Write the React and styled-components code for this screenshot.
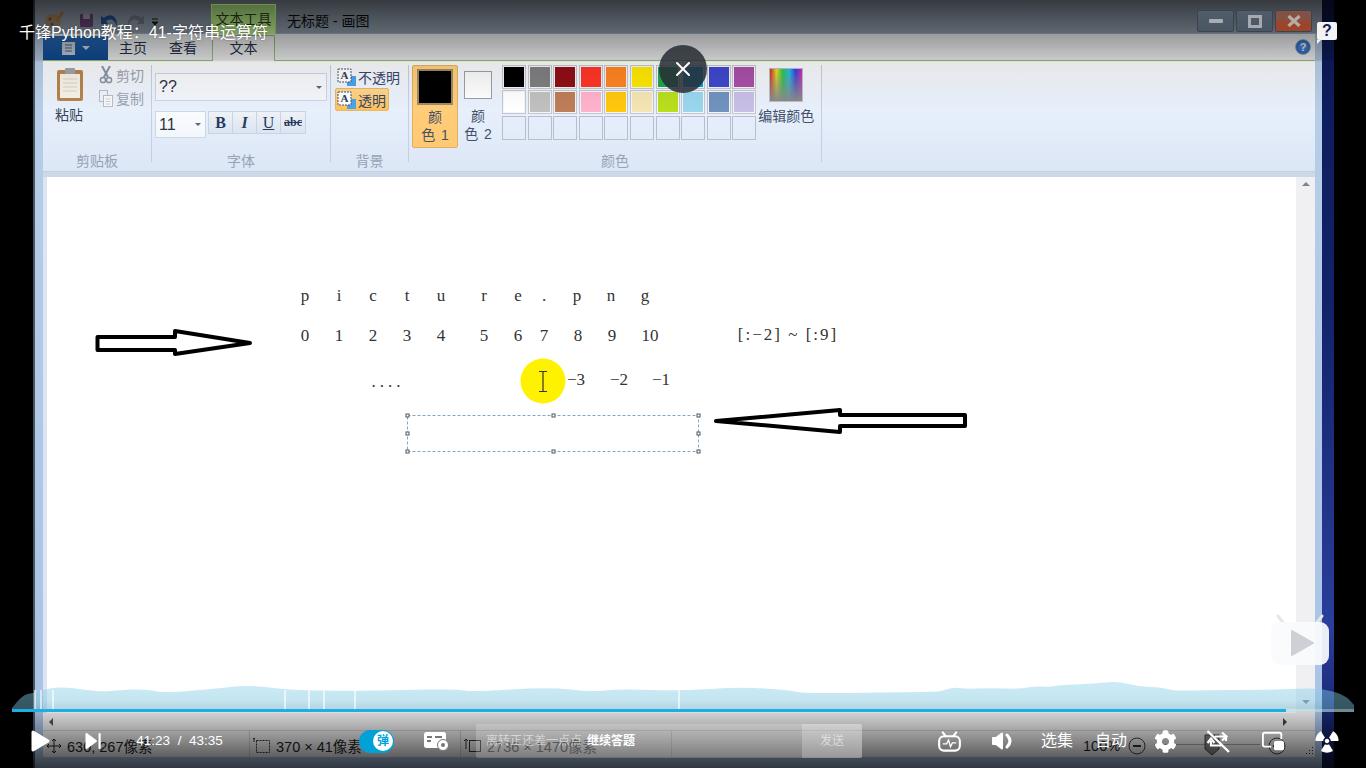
import React from 'react';
import styled, { createGlobalStyle } from 'styled-components';
import { FaCog, FaRadiation } from 'react-icons/fa';

const UI_FONT = `"Liberation Sans", "Noto Sans CJK SC", sans-serif`;

const GlobalStyle = createGlobalStyle`
  html, body { margin: 0; padding: 0; background: #000; }
  * { box-sizing: border-box; }
`;

const Stage = styled.div`
  position: relative;
  width: 1366px;
  height: 768px;
  overflow: hidden;
  background: #000;
  display: flex;
  padding-left: 33px;
  font-family: ${UI_FONT};
`;

const Desktop = styled.div`
  width: 12px;
  height: 100%;
  background: linear-gradient(#0c1a55 0, #12236a 40%, #2a3f9c 82%, #1a2a78 92%, #0f1c50 100%);
`;

const Win = styled.div`
  width: 1289px;
  height: 100%;
  display: flex;
  flex-direction: column;
  border-left: 2px solid #4a5564;
  background: linear-gradient(#b9cfe8, #a9c3e6);
`;

/* title bar */
const TitleBar = styled.div`
  height: 34px;
  flex: none;
  display: flex;
  align-items: flex-start;
  padding-left: 9px;
  background: linear-gradient(#c4d4e6, #bccee2);
`;

const Qat = styled.div`
  width: 167px;
  height: 34px;
  padding-top: 10px;
  flex: none;
`;

const ContextTab = styled.div`
  position: relative;
  z-index: 1;
  margin-top: 4px;
  width: 65px;
  height: 30px;
  background: linear-gradient(#55703f, #7fa35f);
  border: 1px solid #6c8c50;
  border-bottom: 0;
  color: #1c2214;
  font-size: 14px;
  line-height: 28px;
  text-align: center;
  white-space: nowrap;
`;

const WinTitle = styled.div`
  margin: 10px 0 0 11px;
  font-size: 14px;
  line-height: 22px;
  color: #0d0f12;
  white-space: nowrap;
`;

const WinButtons = styled.div`
  position: relative;
  z-index: 1;
  margin: 10px 0 0 auto;
  padding-right: 10px;
  display: flex;
  gap: 2px;
`;

const WinButton = styled.div`
  width: 37px;
  height: 22px;
  border: 1px solid #3a4350;
  border-radius: 2px;
  display: flex;
  align-items: center;
  justify-content: center;
  background: ${(p) => (p.$close ? 'linear-gradient(#845244 50%, #9c4529 50%)' : 'linear-gradient(#515c6a, #4b5664)')};
`;

/* tab row */
const TabRow = styled.div`
  position: relative;
  height: 27px;
  flex: none;
  margin: 0 7px 0 8px;
  display: flex;
  align-items: flex-end;
  border-bottom: 1px solid #9dc77c;
  background: linear-gradient(#f8f9fb, #fafbfc);
`;

const FileTab = styled.div`
  width: 65px;
  height: 24px;
  background: linear-gradient(#2a6fc0, #0e4c98);
  display: flex;
  align-items: center;
  justify-content: center;
  gap: 5px;
`;

const Tab = styled.div`
  width: 50px;
  height: 24px;
  font-size: 14px;
  line-height: 24px;
  text-align: center;
  color: #26344d;
  white-space: nowrap;
  margin-left: ${(p) => p.$ml || 0}px;
`;

const ActiveTab = styled(Tab)`
  width: 63px;
  height: 26px;
  margin-bottom: -1px;
  line-height: 24px;
  background: #fbfbfb;
  border: 1px solid #9dc77c;
  border-bottom: 0;
  border-radius: 2px 2px 0 0;
`;

const HelpDot = styled.div`
  position: absolute;
  right: 4px;
  top: 5px;
  width: 16px;
  height: 16px;
  border-radius: 50%;
  border: 1px solid #9db4d4;
  background: radial-gradient(#5b9cf0, #1f5cc0);
  color: #fff;
  font-size: 11px;
  font-weight: 700;
  line-height: 14px;
  text-align: center;
`;

/* ribbon */
const Ribbon = styled.div`
  height: 111px;
  flex: none;
  margin: 0 7px 0 8px;
  display: flex;
  padding-top: 4px;
  background: linear-gradient(#fbfbfc, #e8f0fc 40%, #dce6f5);
  border-bottom: 1px solid #c4d1e4;
  color: #35466a;
  font-size: 14px;
`;

const Group = styled.div`
  width: ${(p) => p.$w}px;
  flex: none;
  display: flex;
  flex-direction: column;
  border-right: 1px solid #c3d0e4;
  height: 97px;
  position: relative;
`;

const GroupBody = styled.div`
  flex: 1;
  display: flex;
  min-height: 0;
`;

const GroupLabel = styled.div`
  position: absolute;
  left: 0;
  right: 0;
  bottom: -8px;
  text-align: center;
  font-size: 14px;
  line-height: 18px;
  color: #97a2b6;
`;

const PasteCol = styled.div`
  width: 52px;
  padding: 3px 0 0 14px;
  display: flex;
  flex-direction: column;
  align-items: flex-start;
  gap: 5px;
`;

const PasteText = styled.div`
  line-height: 18px;
  margin-left: -2px;
  color: #3a4658;
`;

const ClipCol = styled.div`
  display: flex;
  flex-direction: column;
  gap: 5px;
  padding: 1px 0 0 4px;
`;

const ClipRow = styled.div`
  display: flex;
  align-items: center;
  gap: 3px;
  height: 18px;
  color: #9aa3b2;
`;

const FontCol = styled.div`
  padding: 8px 0 0 3px;
  display: flex;
  flex-direction: column;
  gap: 10px;
`;

const Combo = styled.div`
  height: ${(p) => p.$h}px;
  width: ${(p) => p.$w}px;
  background: linear-gradient(#fafbfd, #f3f6fb);
  border: 1px solid #ccd6e6;
  padding-left: 3px;
  display: flex;
  align-items: center;
  justify-content: space-between;
  color: #2c3442;
  font-size: 16px;
  flex: none;
`;

const ComboArrow = styled.span`
  width: 0;
  height: 0;
  border-left: 3px solid transparent;
  border-right: 3px solid transparent;
  border-top: 3px solid #56657e;
  margin-right: 4px;
`;

const FontRow = styled.div`
  display: flex;
  gap: 2px;
  align-items: flex-start;
`;

const FormatBar = styled.div`
  display: flex;
  height: 23px;
  border: 1px solid #c8d3e4;
  background: linear-gradient(#eef2f8, #dbe4f1);
`;

const FormatBtn = styled.div`
  width: 24px;
  border-right: ${(p) => (p.$last ? '0' : '1px solid #c8d3e4')};
  text-align: center;
  font-family: "Liberation Serif", serif;
  font-size: ${(p) => p.$size || 16}px;
  line-height: 21px;
  font-weight: ${(p) => (p.$bold ? 700 : 400)};
  font-style: ${(p) => (p.$italic ? 'italic' : 'normal')};
  text-decoration: ${(p) => p.$deco || 'none'};
  color: #2a3a5c;
`;

const BgCol = styled.div`
  padding: 0 0 0 4px;
  display: flex;
  flex-direction: column;
`;

const BgRow = styled.div`
  display: flex;
  align-items: center;
  gap: 2px;
  width: 54px;
  height: 23px;
  padding-left: 2px;
  white-space: nowrap;
  border-radius: 2px;
  svg { flex: none; }
  ${(p) => p.$on && 'background: linear-gradient(#ffd891, #ffc05a); border: 1px solid #e8b765; padding-left: 1px;'}
`;

const ColorBtn = styled.div`
  width: ${(p) => p.$w}px;
  margin-left: ${(p) => p.$ml || 0}px;
  height: 83px;
  flex: none;
  border-radius: 2px;
  display: flex;
  flex-direction: column;
  align-items: center;
  font-size: 14px;
  line-height: 18px;
  text-align: center;
  color: #42506a;
  word-spacing: 2px;
  ${(p) => p.$on && 'background: linear-gradient(#ffd07c, #ffc973); border: 1px solid #e3ae62;'}
`;

const BigSwatch = styled.div`
  width: 36px;
  height: 36px;
  margin: 3px 0 3px;
  background: #000;
  border: 2px solid #a08a66;
  flex: none;
`;

const SmallSwatch = styled.div`
  width: 28px;
  height: 28px;
  margin: 6px 0 8px;
  background: linear-gradient(#fafafa, #ffffff);
  border: 1px solid #9aa0aa;
  flex: none;
`;

const Palette = styled.div`
  margin-left: 4px;
  display: grid;
  grid-template-columns: repeat(10, 24px);
  grid-auto-rows: 24px;
  column-gap: 1.6px;
  row-gap: 1.4px;
`;

const Cell = styled.div`
  border: 1px solid ${(p) => (p.$c ? '#c3c6cc' : '#b8bfcc')};
  background: ${(p) => p.$c || 'transparent'};
  box-shadow: ${(p) => (p.$c ? 'inset 0 0 0 1px #f4f6fa' : 'none')};
`;

const EditColors = styled.div`
  width: 60px;
  display: flex;
  flex-direction: column;
  align-items: center;
  white-space: nowrap;
  padding-top: 3px;
  color: #42506a;
`;

const Rainbow = styled.div`
  width: 34px;
  height: 34px;
  border: 1px solid #b9bec8;
  margin-bottom: 3px;
  background: linear-gradient(transparent, #8a8a8a), linear-gradient(90deg, #e02020, #f0e020, #20d040, #20c0f0, #3040e0, #e020c0);
`;

/* workspace */
const Workspace = styled.div`
  flex: 1;
  min-height: 0;
  margin: 0 7px 0 8px;
  padding: 5px 0 0 4px;
  background: linear-gradient(#ccd7e7 5px, #dde4f2 5px);
  display: flex;
`;

const Canvas = styled.div`
  position: relative;
  flex: 1;
  background: #fff;
  font-family: "Liberation Serif", serif;
  font-size: 17px;
  color: #333;
`;

const Glyph = styled.span`
  position: absolute;
  left: ${(p) => p.$x - 47}px;
  top: ${(p) => p.$y - 177}px;
  transform: translate(-50%, -50%);
  white-space: nowrap;
  line-height: 1;
  letter-spacing: ${(p) => p.$ls || 0}px;
`;

const VScroll = styled.div`
  width: 19px;
  flex: none;
  background: #f0f0f3;
  display: flex;
  flex-direction: column;
  justify-content: space-between;
  align-items: center;
  padding: 5px 0 9px;
`;

const HScroll = styled.div`
  height: 17px;
  flex: none;
  margin: 0 7px 0 8px;
  background: #f2f2f4;
  display: flex;
  justify-content: space-between;
  align-items: center;
  padding: 0 28px 0 6px;
`;

const Arrow = styled.span`
  width: 0;
  height: 0;
  ${(p) => p.$dir === 'up' && 'border-left: 4px solid transparent; border-right: 4px solid transparent; border-bottom: 4px solid #7b8494;'}
  ${(p) => p.$dir === 'down' && 'border-left: 4px solid transparent; border-right: 4px solid transparent; border-top: 4px solid #7b8494;'}
  ${(p) => p.$dir === 'left' && 'border-top: 4px solid transparent; border-bottom: 4px solid transparent; border-right: 4px solid #555;'}
  ${(p) => p.$dir === 'right' && 'border-top: 4px solid transparent; border-bottom: 4px solid transparent; border-left: 4px solid #444;'}
`;

const StatusBar = styled.div`
  height: 27px;
  flex: none;
  margin: 0 7px 0 8px;
  background: #efeff1;
  border-top: 1px solid #d5d2d0;
  display: flex;
  color: #1f1f1f;
  font-size: 14.5px;
`;

const StatusCell = styled.div`
  width: ${(p) => p.$w}px;
  flex: none;
  display: flex;
  align-items: center;
  gap: 5px;
  padding-top: 3px;
  padding-left: ${(p) => p.$pl || 4}px;
  border-right: 1px solid #d0cdcb;
  white-space: nowrap;
  color: ${(p) => p.$c || '#1f1f1f'};
`;

const ZoomCell = styled.div`
  flex: 1;
  display: flex;
  align-items: center;
  gap: 8px;
  padding: 3px 0 0 411px;
`;

const Slider = styled.div`
  position: relative;
  width: 106px;
  height: 1px;
  background: #a6a6a6;
  margin-top: -3px;
`;

const SliderThumb = styled.svg`
  position: absolute;
  left: 50px;
  top: -10px;
`;

const Grip = styled.svg`
  margin: 10px 1px 0 auto;
`;

const BottomFrame = styled.div`
  height: 11px;
  flex: none;
`;

/* overlays of the video player */
const TopShade = styled.div`
  position: absolute;
  left: 0;
  right: 0;
  top: 0;
  height: 110px;
  pointer-events: none;
  background: linear-gradient(rgba(0,0,0,.72) 0, rgba(0,0,0,.5) 33px, rgba(0,0,0,.38) 34px, rgba(0,0,0,.2) 60px, rgba(0,0,0,.08) 62px, rgba(0,0,0,0) 110px);
`;

const BottomShade = styled.div`
  position: absolute;
  left: 0;
  right: 0;
  bottom: 0;
  height: 68px;
  pointer-events: none;
  background: linear-gradient(rgba(0,0,0,0), rgba(0,0,0,.72));
`;

const VideoTitle = styled.div`
  position: absolute;
  z-index: 2;
  left: 19px;
  top: 24px;
  color: #fff;
  font-size: 16px;
  line-height: 18px;
  white-space: nowrap;
  text-shadow: 0 0 2px rgba(0,0,0,.4);
`;

const CloseCircle = styled.div`
  position: absolute;
  left: 659px;
  top: 45px;
  width: 48px;
  height: 48px;
  border-radius: 50%;
  background: rgba(40, 44, 52, .86);
  display: flex;
  align-items: center;
  justify-content: center;
`;

const HelpBubble = styled.div`
  position: absolute;
  left: 1317px;
  top: 22px;
  width: 20px;
  height: 18px;
  background: #f3f3f3;
  border-radius: 2px;
  color: #14205c;
  font-size: 16px;
  font-weight: 700;
  line-height: 18px;
  text-align: center;
  &::after {
    content: '';
    position: absolute;
    left: 0;
    top: 18px;
    border-top: 4px solid #f3f3f3;
    border-right: 4px solid transparent;
  }
`;

const Wave = styled.svg`
  position: absolute;
  left: 0;
  top: 678px;
`;

const Progress = styled.div`
  position: absolute;
  left: 12px;
  top: 709px;
  width: 1342px;
  height: 3px;
  background: rgba(255, 255, 255, .3);
`;

const ProgressFill = styled.div`
  height: 100%;
  background: #1eaee6;
`;

const Controls = styled.div`
  position: absolute;
  left: 0;
  right: 0;
  top: 722px;
  height: 38px;
  display: flex;
  align-items: center;
  color: #fff;
`;

const Ctl = styled.div`
  margin-left: ${(p) => p.$ml}px;
  width: ${(p) => p.$w}px;
  flex: none;
  display: flex;
  align-items: center;
  justify-content: center;
  white-space: nowrap;
  font-size: ${(p) => p.$fs || 16}px;
  line-height: 20px;
`;

const DanmakuToggle = styled.div`
  margin-left: 137px;
  width: 35px;
  height: 23px;
  flex: none;
  border-radius: 12px;
  background: #00a1d6;
  display: flex;
  justify-content: flex-end;
  align-items: center;
  padding-right: 1px;
`;

const DanmakuKnob = styled.div`
  width: 20px;
  height: 20px;
  border-radius: 50%;
  background: #fff;
  color: #00a1d6;
  font-size: 12px;
  font-weight: 700;
  line-height: 20px;
  text-align: center;
`;

const DanmakuInput = styled.div`
  margin-left: 27px;
  width: 386px;
  height: 34px;
  flex: none;
  display: flex;
  border-radius: 2px;
  overflow: hidden;
  background: rgba(255, 255, 255, .2);
  font-size: 12px;
  line-height: 34px;
`;

const InputHint = styled.div`
  flex: 1;
  padding-left: 10px;
  color: rgba(255, 255, 255, .55);
  white-space: nowrap;
`;

const InputLink = styled.span`
  color: #fff;
  font-weight: 700;
  margin-left: 5px;
`;

const SendBtn = styled.div`
  width: 60px;
  text-align: center;
  background: rgba(255, 255, 255, .22);
  color: rgba(255, 255, 255, .55);
`;

const TvBadge = styled.svg`
  position: absolute;
  left: 1268px;
  top: 612px;
`;

const GAP_XS = [34, 40, 52, 284, 308, 323, 354, 678];
const WAVE = [[12, 708], [22, 695], [33, 693], [50, 688], [67, 687], [100, 692], [120, 690], [147, 689], [163, 693], [213, 689], [247, 685], [283, 689], [300, 690], [350, 691], [400, 690], [460, 689], [470, 692], [550, 687], [590, 692], [620, 689], [680, 691], [740, 687], [790, 690], [800, 693], [850, 693], [906, 692], [940, 692], [953, 687], [965, 689], [990, 688], [1020, 689], [1035, 686], [1050, 687], [1060, 685], [1090, 684], [1118, 681], [1140, 687], [1160, 687], [1175, 691], [1200, 690], [1260, 690], [1290, 689], [1320, 688], [1345, 695], [1354, 705]];

// rounds the wave by running a quadratic through the midpoints
const wavePath = (pts) => {
  let d = `M12 712 L${pts[0][0]} ${pts[0][1]}`;
  for (let i = 1; i < pts.length - 1; i++) {
    const mx = (pts[i][0] + pts[i + 1][0]) / 2;
    const my = (pts[i][1] + pts[i + 1][1]) / 2;
    d += ` Q${pts[i][0]} ${pts[i][1]} ${mx} ${my}`;
  }
  return `${d} L1354 705 L1354 712 Z`;
};

const ROW_1 = ['#000000', '#7f7f7f', '#900f15', '#ff3526', '#ff8421', '#ffe800', '#1fa550', '#00a2e8', '#3f48cc', '#a84fa8'];
const ROW_2 = ['#ffffff', '#c0c0c0', '#bd7d58', '#ffb2cc', '#ffc80e', '#f5e5b4', '#b8de1d', '#99d6ee', '#7092be', '#c8bfe7'];
const LETTERS = [['p', 305], ['i', 339], ['c', 373], ['t', 407], ['u', 441], ['r', 484], ['e', 518], ['.', 544], ['p', 577], ['n', 611], ['g', 645]];
const DIGITS = [['0', 305], ['1', 339], ['2', 373], ['3', 407], ['4', 441], ['5', 484], ['6', 518], ['7', 544], ['8', 578], ['9', 612], ['10', 650]];
const NEGATIVES = [['−3', 576], ['−2', 619], ['−1', 661]];

const CURRENT = 41 * 60 + 23;
const TOTAL = 43 * 60 + 35;

const AIcon = () => (
  <svg width="19" height="18" viewBox="0 0 19 18">
    <rect x="10" y="8" width="9" height="10" fill="#4aa3ec" />
    <rect x="1" y="1" width="13" height="13" fill="#fff" stroke="#46566e" strokeDasharray="2 1" />
    <text x="7.5" y="11" textAnchor="middle" fontSize="11" fontWeight="700" fontFamily="Liberation Serif" fill="#2a3a5c">A</text>
  </svg>
);

const Selection = () => (
  <svg width="300" height="44" viewBox="0 0 300 44" style={{ position: 'absolute', left: 356, top: 234 }}>
    <rect x="4.5" y="4.5" width="291" height="36" fill="none" stroke="#7fa8c8" strokeDasharray="3 2" />
    {[[4, 4], [150, 4], [295, 4], [4, 22], [295, 22], [4, 40], [150, 40], [295, 40]].map(([x, y]) => (
      <rect key={`${x}-${y}`} x={x - 1} y={y - 1} width="3" height="3" fill="#fff" stroke="#555" />
    ))}
  </svg>
);

const RightArrow = () => (
  <svg width="170" height="40" viewBox="0 0 170 40" style={{ position: 'absolute', left: 44, top: 146 }}>
    <path d="M6.5 14 H84 V8 L159 20 L84 31 V27 H6.5 Z" fill="#fff" stroke="#000" strokeWidth="4" strokeLinejoin="round" />
  </svg>
);

const LeftArrow = () => (
  <svg width="264" height="36" viewBox="0 0 264 36" style={{ position: 'absolute', left: 664, top: 227 }}>
    <path d="M5 17 L129 6 V11 H254 V22 H129 V28 Z" fill="#fff" stroke="#000" strokeWidth="4" strokeLinejoin="round" />
  </svg>
);

const YellowCursor = () => (
  <svg width="46" height="46" viewBox="0 0 46 46" style={{ position: 'absolute', left: 473, top: 181 }}>
    <circle cx="23" cy="23" r="22.5" fill="#fff200" />
    <path d="M19 13.5 H27 M19 33.5 H27 M23 13.5 V33.5" stroke="#333" strokeWidth="1.2" fill="none" />
  </svg>
);

const App = () => {
  return (
    <>
      <GlobalStyle />
      <Stage>
        <Win>
          <TitleBar>
            <Qat>
              <svg width="115" height="22" viewBox="0 0 115 22">
                <ellipse cx="9" cy="11" rx="8" ry="7" fill="#d9b48c" />
                <path d="M12 12 L19 2" stroke="#e8a040" strokeWidth="2.5" />
                <circle cx="6" cy="9" r="1.5" fill="#d04040" />
                <circle cx="8" cy="14" r="1.5" fill="#4080d0" />
                <rect x="36" y="4" width="13" height="13" rx="1" fill="#8a5aa0" />
                <rect x="39" y="4" width="7" height="5" fill="#e0d8e8" />
                <path d="M60 8 C66 2 74 6 73 17 C71 9 66 8 62 11 L64 14 L57 14 L57 6 Z" fill="#2e6cc8" />
                <path d="M97 8 C91 2 83 6 84 17 C86 9 91 8 95 11 L93 14 L100 14 L100 6 Z" fill="#9aa6b8" />
                <path d="M108 9 h6 M108 12 l3 3 l3 -3 z" stroke="#222" fill="#222" />
              </svg>
            </Qat>
            <ContextTab>文本工具</ContextTab>
            <WinTitle>无标题 - 画图</WinTitle>
            <WinButtons>
              <WinButton>
                <svg width="14" height="5"><rect width="14" height="4" rx="1" fill="#a9adb3" /></svg>
              </WinButton>
              <WinButton>
                <svg width="14" height="13"><rect x="1.5" y="1.5" width="11" height="10" fill="none" stroke="#a6aab0" strokeWidth="3" /></svg>
              </WinButton>
              <WinButton $close>
                <svg width="14" height="12"><path d="M1.5 1 L12.5 11 M12.5 1 L1.5 11" stroke="#b5aca6" strokeWidth="3.2" /></svg>
              </WinButton>
            </WinButtons>
          </TitleBar>

          <TabRow>
            <FileTab>
              <svg width="16" height="13"><rect x="1" y="0" width="13" height="13" fill="#cdd6e4" /><path d="M4 3 H11 M4 6 H11 M4 9 H11" stroke="#54688a" /></svg>
              <svg width="8" height="5"><path d="M0 0 H8 L4 4 Z" fill="#d8e0ee" /></svg>
            </FileTab>
            <Tab>主页</Tab>
            <Tab>查看</Tab>
            <ActiveTab $ml={4}>文本</ActiveTab>
            <HelpDot>?</HelpDot>
          </TabRow>

          <Ribbon>
            <Group $w={109}>
              <GroupBody>
                <PasteCol>
                  <svg width="26" height="33" viewBox="0 0 26 33">
                    <rect x="0" y="2" width="26" height="31" rx="2" fill="#b8844e" />
                    <rect x="3" y="6" width="20" height="24" fill="#f7f3e8" />
                    <path d="M6 11 H20 M6 15 H20 M6 19 H20 M6 23 H20" stroke="#d8d4c8" />
                    <rect x="8" y="0" width="10" height="6" rx="1" fill="#a0a4aa" />
                  </svg>
                  <PasteText>粘贴</PasteText>
                </PasteCol>
                <ClipCol>
                  <ClipRow>
                    <svg width="14" height="18" viewBox="0 0 14 18">
                      <path d="M3 0 L9 11 M11 0 L5 11" stroke="#8994a6" strokeWidth="2" />
                      <circle cx="4" cy="14" r="2.6" fill="none" stroke="#8994a6" strokeWidth="1.5" />
                      <circle cx="10" cy="14" r="2.6" fill="none" stroke="#8994a6" strokeWidth="1.5" />
                    </svg>
                    剪切
                  </ClipRow>
                  <ClipRow>
                    <svg width="14" height="17" viewBox="0 0 14 17">
                      <rect x="0.5" y="0.5" width="8" height="11" fill="#f2f4f8" stroke="#b6bcc8" />
                      <rect x="4.5" y="5.5" width="9" height="11" fill="#fafbfc" stroke="#b6bcc8" />
                      <path d="M6.5 9 H11.5 M6.5 11.5 H11.5 M6.5 14 H11.5" stroke="#c8ccd4" />
                    </svg>
                    复制
                  </ClipRow>
                </ClipCol>
              </GroupBody>
              <GroupLabel>剪贴板</GroupLabel>
            </Group>

            <Group $w={179}>
              <GroupBody>
                <FontCol>
                  <Combo $w={172} $h={28}>
                    ??
                    <ComboArrow />
                  </Combo>
                  <FontRow>
                    <Combo $w={51} $h={27}>
                      11
                      <ComboArrow />
                    </Combo>
                    <FormatBar>
                      <FormatBtn $bold>B</FormatBtn>
                      <FormatBtn $italic $bold>I</FormatBtn>
                      <FormatBtn $deco="underline">U</FormatBtn>
                      <FormatBtn $last $bold $size={12} $deco="line-through">abc</FormatBtn>
                    </FormatBar>
                  </FontRow>
                </FontCol>
              </GroupBody>
              <GroupLabel>字体</GroupLabel>
            </Group>

            <Group $w={78}>
              <GroupBody>
                <BgCol>
                  <BgRow><AIcon />不透明</BgRow>
                  <BgRow $on><AIcon />透明</BgRow>
                </BgCol>
              </GroupBody>
              <GroupLabel>背景</GroupLabel>
            </Group>

            <Group $w={413}>
              <GroupBody>
                <ColorBtn $w={46} $ml={3} $on>
                  <BigSwatch />
                  颜<br />色 1
                </ColorBtn>
                <ColorBtn $w={40}>
                  <SmallSwatch />
                  颜<br />色 2
                </ColorBtn>
                <Palette>
                  {ROW_1.concat(ROW_2).map((c, i) => <Cell key={i} $c={c} />)}
                  {Array.from({ length: 10 }).map((_, i) => <Cell key={i} />)}
                </Palette>
                <EditColors>
                  <Rainbow />
                  编辑颜色
                </EditColors>
              </GroupBody>
              <GroupLabel>颜色</GroupLabel>
            </Group>
          </Ribbon>

          <Workspace>
            <Canvas>
              {LETTERS.map(([t, x], i) => <Glyph key={i} $x={x} $y={295}>{t}</Glyph>)}
              {DIGITS.map(([t, x], i) => <Glyph key={i} $x={x} $y={335}>{t}</Glyph>)}
              <Glyph $x={788} $y={334} $ls={2}>[:−2] ~ [:9]</Glyph>
              <Glyph $x={388} $y={381} $ls={4}>....</Glyph>
              {NEGATIVES.map(([t, x]) => <Glyph key={t} $x={x} $y={379}>{t}</Glyph>)}
              <RightArrow />
              <LeftArrow />
              <Selection />
              <YellowCursor />
            </Canvas>
            <VScroll>
              <Arrow $dir="up" />
              <Arrow $dir="down" />
            </VScroll>
          </Workspace>
          <HScroll>
            <Arrow $dir="left" />
            <Arrow $dir="right" />
          </HScroll>
          <StatusBar>
            <StatusCell $w={207} $pl={3}>
              <svg width="16" height="16" viewBox="0 0 16 16">
                <path d="M8 1 V15 M1 8 H15 M6 3 L8 1 L10 3 M6 13 L8 15 L10 13 M3 6 L1 8 L3 10 M13 6 L15 8 L13 10" stroke="#222" fill="none" />
              </svg>
              630, 267像素
            </StatusCell>
            <StatusCell $w={211} $pl={3}>
              <svg width="18" height="18" viewBox="0 0 18 18">
                <rect x="3.5" y="3.5" width="13" height="12" fill="none" stroke="#333" strokeDasharray="2 1" />
                <path d="M1 1 V5 M0 2 L1 1 L2 2" stroke="#333" fill="none" />
              </svg>
              370 × 41像素
            </StatusCell>
            <StatusCell $w={211} $pl={3} $c="#555">
              <svg width="18" height="18" viewBox="0 0 18 18">
                <rect x="5.5" y="3.5" width="11" height="11" fill="none" stroke="#333" />
                <path d="M2 2 V12 M0 4 L2 2 L4 4" stroke="#333" fill="none" />
              </svg>
              2736 × 1470像素
            </StatusCell>
            <ZoomCell>
              100%
              <svg width="18" height="18" viewBox="0 0 18 18">
                <circle cx="9" cy="9" r="8" fill="none" stroke="#444" />
                <path d="M5 9 H13" stroke="#333" strokeWidth="2" />
              </svg>
              <Slider>
                <SliderThumb width="16" height="22" viewBox="0 0 16 22">
                  <path d="M1 1 H15 V15 L8 21 L1 15 Z" fill="#8d8b8a" stroke="#444" />
                </SliderThumb>
              </Slider>
              <svg width="18" height="18" viewBox="0 0 18 18">
                <circle cx="9" cy="9" r="8" fill="none" stroke="#444" />
                <path d="M5 9 H13 M9 5 V13" stroke="#333" strokeWidth="2" />
              </svg>
              <Grip width="10" height="10" viewBox="0 0 10 10">
                <path d="M8 1 h1 v1 h-1 z M5 4 h1 v1 h-1 z M8 4 h1 v1 h-1 z M2 7 h1 v1 h-1 z M5 7 h1 v1 h-1 z M8 7 h1 v1 h-1 z" fill="#333" />
              </Grip>
            </ZoomCell>
          </StatusBar>
          <BottomFrame />
        </Win>
        <Desktop />

        <TopShade />
        <BottomShade />

        <Wave width="1366" height="40" viewBox="0 678 1366 40">
          <defs>
            <linearGradient id="waveFill" x1="0" y1="0" x2="0" y2="1">
              <stop offset="0" stopColor="#8cd2eb" stopOpacity="0.45" />
              <stop offset="1" stopColor="#74bdd6" stopOpacity="0.45" />
            </linearGradient>
          </defs>
          <path d={wavePath(WAVE)} fill="url(#waveFill)" />
          {GAP_XS.map((x) => <rect key={x} x={x} y="690" width="2" height="19" fill="#fff" opacity="0.6" />)}
        </Wave>

        <Progress>
          <ProgressFill style={{ width: `${(CURRENT / TOTAL) * 100}%` }} />
        </Progress>

        <VideoTitle>千锋Python教程：41-字符串运算符</VideoTitle>
        <CloseCircle>
          <svg width="16" height="16" viewBox="0 0 16 16">
            <path d="M2 2 L14 14 M14 2 L2 14" stroke="#fff" strokeWidth="2" strokeLinecap="round" />
          </svg>
        </CloseCircle>
        <HelpBubble>?</HelpBubble>

        <TvBadge width="64" height="56" viewBox="0 0 64 56">
          <path d="M16 12 L10 4 M48 12 L54 4" stroke="#e4e6ea" strokeWidth="3" strokeLinecap="round" />
          <rect x="3" y="10" width="58" height="43" rx="9" fill="#fafbfc" fillOpacity="0.93" />
          <path d="M24 19 L45 31 L24 43 Z" fill="#cdd0d4" stroke="#cdd0d4" strokeWidth="2" strokeLinejoin="round" />
        </TvBadge>

        <Controls>
          <Ctl $ml={31} $w={19}>
            <svg width="19" height="22" viewBox="0 0 19 22"><path d="M2 2 L17 11 L2 20 Z" fill="#fff" stroke="#fff" strokeWidth="3" strokeLinejoin="round" /></svg>
          </Ctl>
          <Ctl $ml={35} $w={16}>
            <svg width="16" height="18" viewBox="0 0 16 18"><path d="M1.5 2 L11 9 L1.5 16 Z" fill="#fff" stroke="#fff" strokeWidth="2" strokeLinejoin="round" /><rect x="13.5" y="1" width="2.2" height="16" rx="1" fill="#fff" /></svg>
          </Ctl>
          <Ctl $ml={36} $w={85} $fs={13.5}>41:23&nbsp;&nbsp;/&nbsp;&nbsp;43:35</Ctl>
          <DanmakuToggle>
            <DanmakuKnob>弹</DanmakuKnob>
          </DanmakuToggle>
          <Ctl $ml={30} $w={25}>
            <svg width="25" height="20" viewBox="0 0 25 20">
              <rect x="0" y="1" width="22" height="16" rx="2.5" fill="#fff" />
              <path d="M3 6 H8 M3 10 H7 M11 6 H18" stroke="#777" strokeWidth="1.8" />
              <circle cx="19" cy="14" r="5.5" fill="#fff" stroke="#777" strokeWidth="1" />
              <circle cx="19" cy="14" r="2" fill="#777" />
            </svg>
          </Ctl>
          <DanmakuInput>
            <InputHint>
              离转正还差一点点
              <InputLink>继续答题</InputLink>
            </InputHint>
            <SendBtn>发送</SendBtn>
          </DanmakuInput>
          <Ctl $ml={76} $w={23}>
            <svg width="24" height="21" viewBox="0 0 24 21" fill="none" stroke="#fff" strokeWidth="2.2">
              <path d="M8 5 L5 1 M16 5 L19 1" strokeLinecap="round" />
              <rect x="1.2" y="5" width="21.6" height="15" rx="5" />
              <path d="M5 13 H9 L11 9 L13 16 L15 12 H19" strokeWidth="1.4" />
            </svg>
          </Ctl>
          <Ctl $ml={31} $w={22}>
            <svg width="22" height="20" viewBox="0 0 22 20">
              <path d="M1 7 H4 L10 2.5 V17.5 L4 13 H1 Z" fill="#fff" stroke="#fff" strokeWidth="2" strokeLinejoin="round" />
              <path d="M15 4 C19 8 19 12 15 16" stroke="#fff" strokeWidth="3" fill="none" strokeLinecap="round" />
            </svg>
          </Ctl>
          <Ctl $ml={27} $w={32}>选集</Ctl>
          <Ctl $ml={22} $w={32}>自动</Ctl>
          <Ctl $ml={26} $w={24}><FaCog size={23} /></Ctl>
          <Ctl $ml={29} $w={24}>
            <svg width="24" height="23" viewBox="0 0 24 23" fill="none" stroke="#fff" strokeWidth="2.2">
              <path d="M9 6.5 H20 V11 M16 2.5 L20.5 6.5 L16 10.5" />
              <path d="M15 15.5 H5 V11 M1.5 13 L5 8.5 L8.5 13" />
              <path d="M1.5 1 L23 22" strokeWidth="2.4" />
            </svg>
          </Ctl>
          <Ctl $ml={32} $w={23}>
            <svg width="25" height="21" viewBox="0 0 25 21" fill="none">
              <path d="M10 16 H3 A2 2 0 0 1 1 14 V3 A2 2 0 0 1 3 1 H19 A2 2 0 0 1 21 3 V8" stroke="#fff" strokeWidth="2" />
              <rect x="13" y="10" width="11" height="10" rx="2" fill="#fff" />
            </svg>
          </Ctl>
          <Ctl $ml={30} $w={24}><FaRadiation size={24} /></Ctl>
        </Controls>
      </Stage>
    </>
  );
};

export default App;
